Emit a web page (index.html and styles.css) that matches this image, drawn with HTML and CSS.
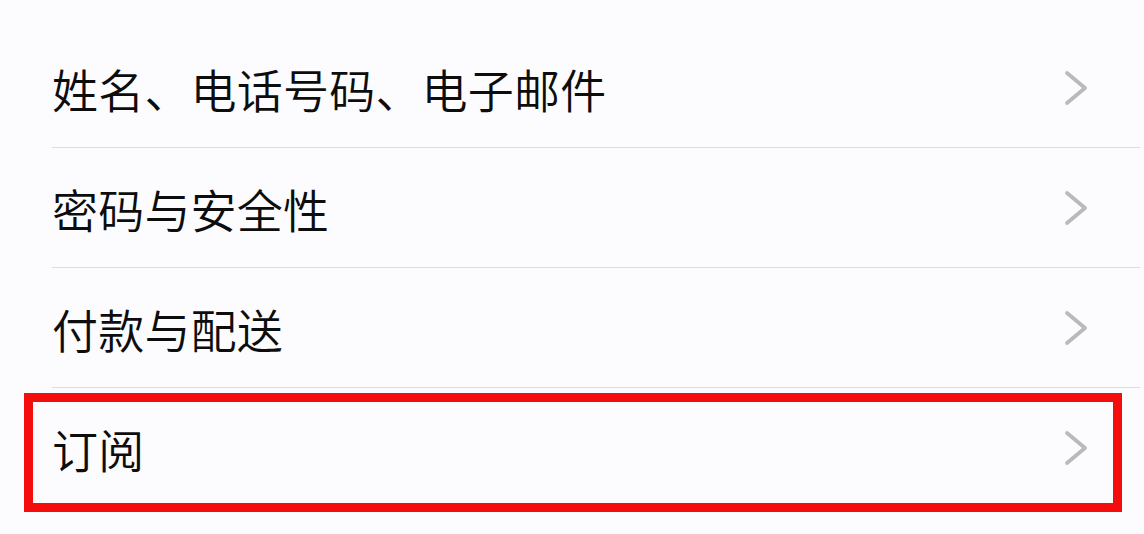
FILE: index.html
```html
<!DOCTYPE html>
<html lang="zh-CN">
<head>
<meta charset="utf-8">
<title>Apple ID</title>
<link rel="stylesheet" href="styles.css">
</head>
<body>
<ul class="list">
  <li class="row">
    <div class="row-inner">
      <span class="label">姓名、电话号码、电子邮件</span>
      <svg class="chev" viewBox="0 0 24 36" width="24" height="36"><path d="M3 3 L21 18 L3 33"/></svg>
    </div>
  </li>
  <li class="row">
    <div class="row-inner">
      <span class="label">密码与安全性</span>
      <svg class="chev" viewBox="0 0 24 36" width="24" height="36"><path d="M3 3 L21 18 L3 33"/></svg>
    </div>
  </li>
  <li class="row">
    <div class="row-inner">
      <span class="label">付款与配送</span>
      <svg class="chev" viewBox="0 0 24 36" width="24" height="36"><path d="M3 3 L21 18 L3 33"/></svg>
    </div>
  </li>
  <li class="row row-last">
    <div class="row-inner">
      <span class="label">订阅</span>
      <svg class="chev" viewBox="0 0 24 36" width="24" height="36"><path d="M3 3 L21 18 L3 33"/></svg>
    </div>
    <div class="highlight"></div>
  </li>
</ul>
</body>
</html>
```
FILE: styles.css
```css
html, body {
  margin: 0;
  padding: 0;
  background: #fcfbfe;
}
body {
  width: 1144px;
  height: 534px;
  overflow: hidden;
  font-family: "Noto Sans CJK SC", "Noto Sans", sans-serif;
  color: #0d0d0d;
}
.list {
  list-style: none;
  margin: 0;
  padding: 28px 0 0 0;
}
.row {
  position: relative;
  padding-left: 52px;
}
.row-inner {
  height: 119px;
  border-bottom: 1px solid #dcdcdf;
  margin-right: 4px;
  display: flex;
  align-items: center;
  justify-content: space-between;
  padding-right: 52px;
}
.row-last .row-inner {
  border-bottom: none;
}
.label {
  font-size: 46px;
  line-height: 1;
  font-weight: 350;
  letter-spacing: 0.2px;
  margin-top: 0;
}
.chev {
  display: block;
}
.chev path {
  fill: none;
  stroke: #b9b9be;
  stroke-width: 3.8;
  stroke-linecap: round;
  stroke-linejoin: round;
}
.highlight {
  position: absolute;
  left: 24px;
  top: 5px;
  width: 1098px;
  height: 119px;
  box-sizing: border-box;
  border: 9px solid #f40d0d;
  pointer-events: none;
}
```
